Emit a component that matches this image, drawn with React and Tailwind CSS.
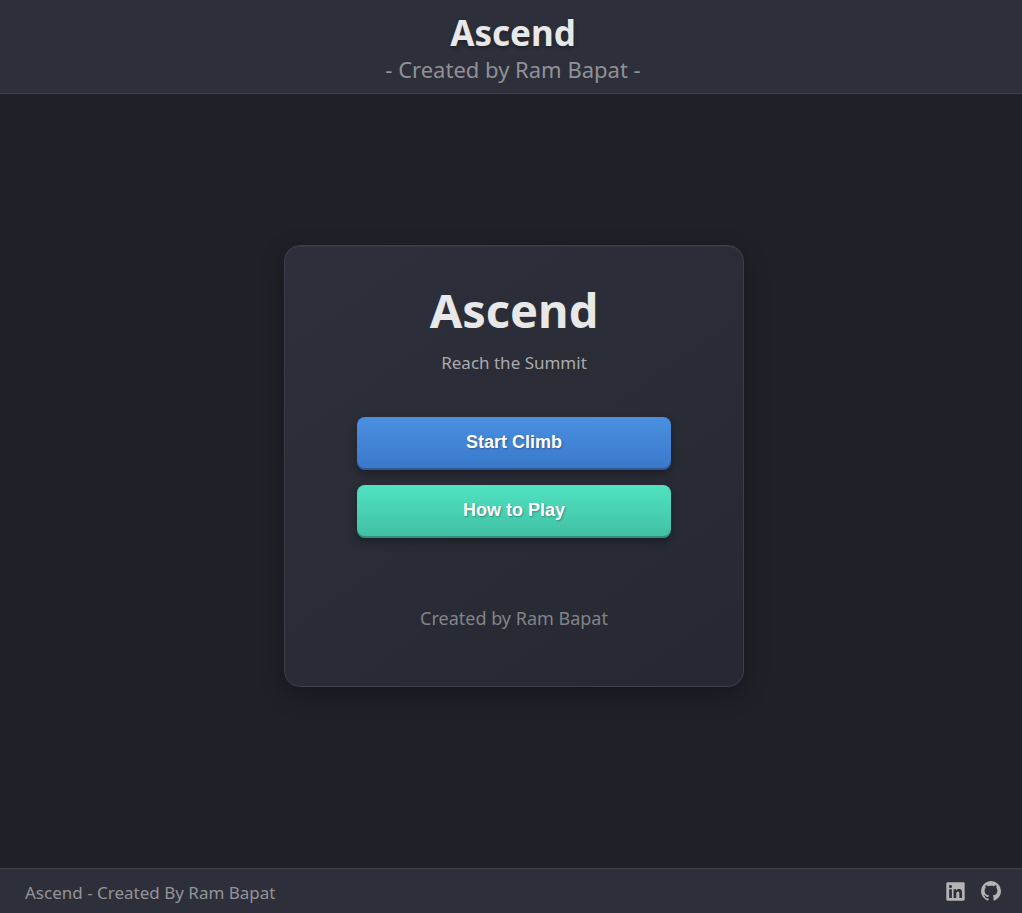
import { FaLinkedin } from "react-icons/fa";

function MenuButton({ className, children }) {
  return (
    <button
      type="button"
      className={`h-[53px] w-full rounded-lg pb-[3px] font-['Liberation_Sans',sans-serif] text-[18px] font-bold text-white shadow-[0_4px_8px_rgba(0,0,0,0.3),inset_0_-2px_0_rgba(0,0,0,0.25)] [text-shadow:1px_1px_2px_rgba(0,0,0,0.3)] ${className}`}
    >
      {children}
    </button>
  );
}

function GitHubIcon() {
  return (
    <svg className="size-6" viewBox="0 0 24 24" fill="currentColor" aria-hidden="true">
      <path d="M12 2A10 10 0 0 0 2 12c0 4.420 2.870 8.170 6.840 9.500.5.080.66-.23.66-.5v-1.690c-2.770.6-3.360-1.340-3.360-1.340-.46-1.160-1.110-1.470-1.110-1.470-.91-.62.07-.6.07-.6 1 .07 1.530 1.030 1.530 1.030.87 1.520 2.340 1.070 2.910.83.09-.65.35-1.090.63-1.340-2.220-.25-4.550-1.110-4.550-4.920 0-1.110.38-2 1.030-2.710-.1-.25-.45-1.290.1-2.640 0 0 .84-.27 2.750 1.020.79-.22 1.650-.33 2.500-.33.850 0 1.710.11 2.500.33 1.910-1.290 2.750-1.020 2.750-1.020.55 1.350.2 2.390.1 2.640.65.71 1.030 1.600 1.030 2.710 0 3.820-2.340 4.660-4.570 4.910.36.31.69.92.69 1.850V21c0 .27.16.59.67.5C19.140 20.160 22 16.420 22 12A10 10 0 0 0 12 2" />
    </svg>
  );
}

export default function App() {
  return (
    <div className="flex min-h-screen flex-col bg-[#202128] font-['Noto_Sans','Open_Sans',sans-serif] text-[#e8e8e8]">
      <header className="border-b border-[#414249] bg-[#2d2f3a] pt-3 pr-4 pb-2 pl-5 text-center">
        <h1 className="text-[35px] leading-[42px] font-bold [text-shadow:0_2px_4px_rgba(0,0,0,0.3)]">Ascend</h1>
        <p className="text-[22px] leading-[31px] text-[#919196]">- Created by Ram Bapat -</p>
      </header>
      <main className="flex flex-1 items-center justify-center pt-1 pr-4 pb-[34px] pl-[22px]">
        <section className="w-full max-w-[460px] rounded-2xl border border-[#3d3e47] bg-linear-[145deg] from-[#2d2f3a] to-[#262832] px-[72px] pt-8 pb-[54px] text-center shadow-[0_8px_24px_rgba(0,0,0,0.3),inset_0_1px_0_rgba(255,255,255,0.05)]">
          <h2 className="text-[47px] leading-[64px] font-bold">Ascend</h2>
          <p className="mt-[7px] text-[17px] leading-[28px] text-[#aaaaad]">Reach the Summit</p>
          <div className="mt-10 flex flex-col gap-[15px]">
            <MenuButton className="bg-linear-to-b from-[#4a90e2] to-[#3a78c9]">Start Climb</MenuButton>
            <MenuButton className="bg-linear-to-b from-[#50e3c2] to-[#40bfa3]">How to Play</MenuButton>
          </div>
          <p className="mt-[66px] text-[18px] leading-[28px] text-[#848488]">Created by Ram Bapat</p>
        </section>
      </main>
      <footer className="flex h-[45px] items-center justify-between border-t border-[#414249] bg-[#2d2f3a] pr-[19px] pl-[25px]">
        <span className="pt-1 text-[17px] text-[#949498]">Ascend - Created By Ram Bapat</span>
        <div className="flex gap-3 text-[#b4b4b4]">
          <a href="https://www.linkedin.com" aria-label="LinkedIn" className="flex size-6 items-center justify-center"><FaLinkedin size={21} /></a>
          <a href="https://github.com" aria-label="GitHub"><GitHubIcon /></a>
        </div>
      </footer>
    </div>
  );
}
